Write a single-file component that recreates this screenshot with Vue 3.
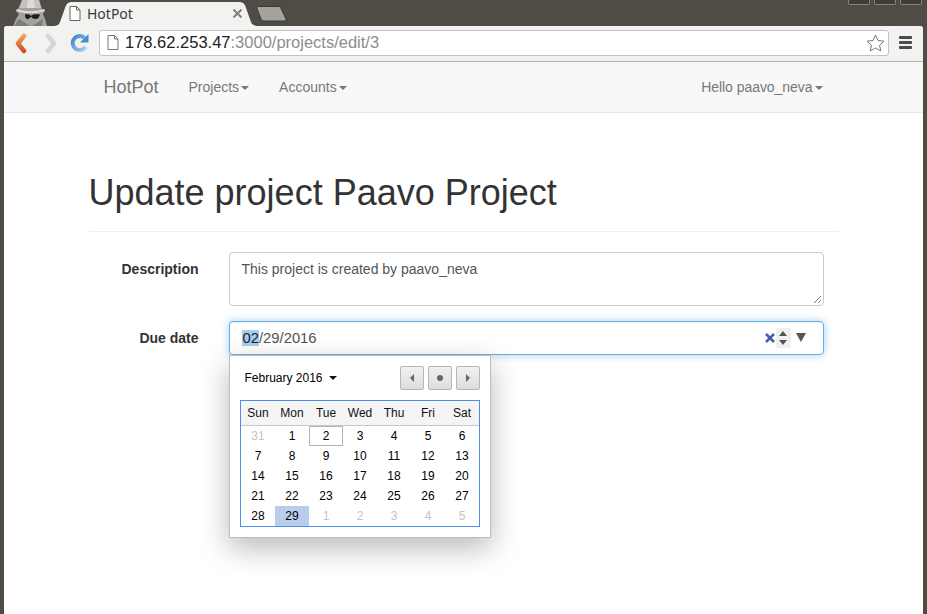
<script setup>
const weekdays = ['Sun', 'Mon', 'Tue', 'Wed', 'Thu', 'Fri', 'Sat']
const days = [
  { n: 31, muted: true }, ...Array.from({ length: 29 }, (_, i) => ({ n: i + 1, today: i === 1, selected: i === 28 })),
  ...[1, 2, 3, 4, 5].map((n) => ({ n, muted: true }))
]
</script>

<template>
  <div class="frame">
    <header class="titlebar">
      <svg class="spy" width="48" height="26" viewBox="0 0 48 26">
        <path d="M14 9 18 0h17l3 9 3 1-2 4 2 5 2 7H9l3-7 3-5-3-3z" fill="#a3a29e" />
        <path d="M18 0h17l2 8H16z" fill="#c4c3bf" />
        <path d="M24 0h6l1 8h-8z" fill="#dddcd9" />
        <path d="M13 9c8 3 19 3 27 0l1 2c-9 3-20 3-29 0z" fill="#dedddb" />
        <path d="M15 19l11 7H10zM39 19l-1 7H28z" fill="#7c7b77" />
        <path d="M21 14.500c3-.5 5 0 6 1.500 1-1.500 4-2 9-1.500-1 3-2 4.500-4.500 4.500s-3.500-1-4.500-2.500c-1 1.500-2 2.500-3.500 2.500-1.500 0-2.500-1.500-2.500-4.500z" fill="#1f1e1c" />
      </svg>
      <div class="tab">
        <svg class="tab-shape" width="206" height="24" viewBox="0 0 206 24"><path d="M0 24c4 0 6-1 7-4l5-14c1.500-4 3-6 7-6h167c4 0 6 2 7 6l5 14c1 3 4 4 8 4z" fill="#f2f2f0" /></svg>
        <svg class="doc" width="12" height="15" viewBox="0 0 12 15"><path d="M1 .5h6.500l3.500 3.500v10.500h-10z M7.500 .5v3.500h3.500" fill="#fff" stroke="#666" /></svg>
        <span class="tab-title">HotPot</span>
        <svg class="tab-close" width="9" height="9" viewBox="0 0 9 9"><path d="m.5.500 8 8M8.500.5l-8 8" stroke="#808080" stroke-width="2" /></svg>
      </div>
      <svg class="new-tab" width="32" height="16" viewBox="0 0 32 16"><path d="M1 2.500C.5 1 1.500.5 3 .5h19c1.500 0 2.500.5 3 2l5 10.500c.5 1.500-.5 2-2 2H8c-1.500 0-2.500-.5-3-2z" fill="#a5a39e" stroke="#3b3935" /></svg>
      <div class="win-btns"><span></span><span></span><span></span></div>
    </header>

    <div class="browser">
      <div class="toolbar">
        <svg width="16" height="22" viewBox="0 0 16 22" class="back">
          <defs><linearGradient id="bk" x1="0" y1="0" x2="0" y2="1"><stop offset="0" stop-color="#f0a060" /><stop offset="1" stop-color="#d2501e" /></linearGradient></defs>
          <path d="M11 4 5 11.500l6 7.500" fill="none" stroke="url(#bk)" stroke-width="4.500" stroke-linejoin="round" stroke-linecap="round" />
        </svg>
        <svg width="14" height="22" viewBox="0 0 14 22" class="fwd"><path d="m3 4 6 7.500-6 7.500" fill="none" stroke="#d6d6d4" stroke-width="4.500" stroke-linejoin="round" stroke-linecap="round" /></svg>
        <svg width="20" height="20" viewBox="0 0 20 20" class="reload">
          <defs><linearGradient id="rl" x1="0" y1="0" x2="1" y2="1"><stop offset="0" stop-color="#3f87cc" /><stop offset="1" stop-color="#a6cdf0" /></linearGradient></defs>
          <path d="M15.500 14a7 7 0 1 1-.5-8.500" fill="none" stroke="url(#rl)" stroke-width="4" />
          <path d="M18.500 1v8.500h-8.500z" fill="#4a8dcf" />
        </svg>
        <div class="omnibox">
          <svg class="doc url-doc" width="12" height="15" viewBox="0 0 12 15"><path d="M1 .5h6.500l3.500 3.500v10.500h-10z M7.500 .5v3.500h3.500" fill="#fff" stroke="#777" /></svg>
          <span class="host">178.62.253.47</span><span class="path">:3000/projects/edit/3</span>
          <svg class="star" width="19" height="18" viewBox="0 0 19 18"><path d="m9.500 1 2.500 5.500 6 .7-4.400 4 1.200 5.800-5.300-3-5.300 3 1.200-5.800-4.400-4 6-.7z" fill="#fff" stroke="#777" /></svg>
        </div>
        <div class="menu"><i></i><i></i><i></i></div>
      </div>

      <nav class="navbar">
        <div class="container nav-inner">
          <a class="brand">HotPot</a>
          <a class="nav-link">Projects<b class="caret"></b></a>
          <a class="nav-link">Accounts<b class="caret"></b></a>
          <a class="nav-link user">Hello paavo_neva<b class="caret"></b></a>
        </div>
      </nav>

      <main class="container page">
        <h1>Update project Paavo Project</h1>
        <form class="form">
          <div class="row">
            <label>Description</label>
            <div class="fake-textarea">This project is created by paavo_neva
              <svg class="grip" width="9" height="9" viewBox="0 0 9 9"><path d="M1 8l7-7M5 8l3-3" stroke="#777" /></svg>
            </div>
          </div>
          <div class="row date-row">
            <label>Due date</label>
            <div class="date-field">
              <span class="date-text"><span class="sel">02</span>/29/2016</span>
              <span class="clear">
                <svg width="10" height="10" viewBox="0 0 10 10"><path d="m1 1 8 8M9 1 1 9" stroke="#3a62a8" stroke-width="2.500" /></svg>
              </span>
              <span class="spin"><i class="up"></i><i class="down"></i></span>
              <i class="drop"></i>

              <div class="picker">
                <div class="picker-head">
                  <span class="month">February 2016<b class="month-caret"></b></span>
                  <div class="pick-btns">
                    <button type="button" class="pbtn"><i class="left"></i></button>
                    <button type="button" class="pbtn"><i class="dot"></i></button>
                    <button type="button" class="pbtn"><i class="right"></i></button>
                  </div>
                </div>
                <div class="cal">
                  <div class="wk" v-for="w in weekdays" :key="w">{{ w }}</div>
                  <div
                    v-for="(d, i) in days"
                    :key="i"
                    class="day"
                    :class="{ muted: d.muted, today: d.today, selected: d.selected }"
                  >{{ d.n }}</div>
                </div>
              </div>
            </div>
          </div>
        </form>
      </main>
    </div>
  </div>
</template>

<style>
html, body { margin: 0; overflow: hidden; }
</style>

<style scoped>
.frame {
  width: 927px; height: 614px; background: #4f4c45; padding: 0 4px; box-sizing: border-box;
  display: flex; flex-direction: column; overflow: hidden;
  font-family: "Liberation Sans", Arial, sans-serif; color: #333;
}
.titlebar { height: 26px; flex: none; display: flex; align-items: flex-end; position: relative; }
.spy { position: absolute; left: 0; top: 0; }
.tab {
  position: relative; width: 206px; height: 24px; margin-left: 49px; display: flex; align-items: center;
  box-sizing: border-box; padding: 0 0 2px 16px;
}
.tab-shape { position: absolute; left: 0; bottom: 0; }
.tab .doc { position: relative; }
.tab-title { position: relative; margin-left: 6px; font-family: "Noto Sans", sans-serif; font-size: 14px; color: #3a3a3a; }
.tab-close { position: relative; margin-left: auto; margin-right: 17px; }
.new-tab { margin: 0 0 4px -3px; position: relative; }
.win-btns { position: absolute; right: 1px; top: -1px; display: flex; gap: 4px; }
.win-btns span { width: 20px; height: 5px; border: 1px solid #85837d; border-top: 0; border-radius: 0 0 2px 2px; background: #3f3d38; }

.browser { flex: 1; background: #fff; border-radius: 3px 3px 0 0; overflow: hidden; display: flex; flex-direction: column; }
.toolbar {
  height: 36px; flex: none; box-sizing: border-box; background: #f2f2f0; border-bottom: 1px solid #b0b0ae;
  display: flex; align-items: center; padding: 0 0 2px 9px;
}
.back { margin-right: 16px; }
.fwd { margin-right: 11px; }
.reload { margin-right: 9px; }
.omnibox {
  width: 790px; height: 26px; box-sizing: border-box; background: #fff; border: 1px solid #c3c3c1; border-radius: 3px;
  display: flex; align-items: center; padding-left: 7px; font-size: 16.500px;
}
.url-doc { margin-right: 6px; }
.host { color: #222; }
.path { color: #8d8d8d; }
.star { margin-left: auto; margin-right: 3px; }
.menu { margin-left: 10px; display: flex; flex-direction: column; gap: 2px; }
.menu i { display: block; width: 13px; height: 3px; background: #4a4a4a; border-radius: 1px; }

.container { width: 750px; margin: 0 auto; }
.navbar { height: 51px; flex: none; box-sizing: border-box; background: #f8f8f8; border-bottom: 1px solid #e7e7e7; }
.nav-inner { display: flex; align-items: center; height: 50px; font-size: 14px; padding: 0 15px; box-sizing: border-box; }
.brand { font-size: 18px; color: #777; margin-right: 30px; }
.nav-link { color: #777; margin-right: 30px; }
.nav-link.user { margin-left: auto; margin-right: 1px; letter-spacing: -.05px; }
.caret { display: inline-block; margin-left: 2px; vertical-align: middle; border-top: 4px solid #777; border-left: 4px solid transparent; border-right: 4px solid transparent; }

.page { flex: 1; }
h1 { margin: 60px 0 0; font-size: 36px; font-weight: 400; line-height: 40px; padding-bottom: 18px; border-bottom: 1px solid #eee; color: #333; }
.form { padding-top: 20px; font-size: 14px; }
.row { display: flex; }
.row label { width: 110px; margin-right: 30px; text-align: right; font-weight: 700; padding-top: 7px; line-height: 20px; flex: none; }
.fake-textarea {
  width: 595px; height: 54px; box-sizing: border-box; border: 1px solid #ccc; border-radius: 4px; padding: 6px 12px;
  line-height: 20px; color: #555; position: relative;
}
.grip { position: absolute; right: 1px; bottom: 1px; }
.date-row { margin-top: 15px; }
.date-row label { padding-top: 7px; }
.date-field {
  width: 595px; height: 34px; box-sizing: border-box; border: 1px solid #66afe9; border-radius: 4px; position: relative;
  box-shadow: inset 0 1px 1px rgba(0,0,0,.075), 0 0 8px rgba(102,175,233,.6);
  display: flex; align-items: center; padding-left: 12px; color: #555; line-height: 20px; background: #fff;
  font-size: 14.800px;
}
.sel { background: #a9cdf2; color: #222; padding-left: 1px; }
.date-text { flex: 1; }
.clear { display: flex; margin-right: 1px; }
.spin { width: 15px; height: 20px; background: #f0f0f0; display: flex; flex-direction: column; align-items: center; justify-content: center; gap: 4px; }
.spin i { display: block; border-left: 4px solid transparent; border-right: 4px solid transparent; }
.spin .up { border-bottom: 5px solid #555; }
.spin .down { border-top: 5px solid #555; }
.drop { display: block; border-left: 5px solid transparent; border-right: 5px solid transparent; border-top: 9px solid #555; margin: 0 17px 2px 5px; }

.picker {
  position: absolute; left: -1px; top: 33px; width: 262px; height: 183px; box-sizing: border-box; background: #fff;
  border: 1px solid #bdbdbd; box-shadow: 0 10px 28px rgba(0,0,0,.28); padding: 10px 10px 0; color: #000; z-index: 2;
  font-size: 12px;
}
.picker-head { display: flex; align-items: center; justify-content: space-between; height: 24px; padding: 0 0 0 5px; margin-bottom: 10px; }
.month { font-size: 12px; display: flex; align-items: center; }
.month-caret { display: block; margin-left: 6px; border-top: 4px solid #111; border-left: 4px solid transparent; border-right: 4px solid transparent; }
.pick-btns { display: flex; gap: 4px; }
.pbtn {
  width: 24px; height: 24px; padding: 0; box-sizing: border-box; border: 1px solid #b5b5b5; border-radius: 2px;
  background: linear-gradient(#f0f0f0, #dedede); display: flex; align-items: center; justify-content: center;
}
.left { border-right: 4px solid #666; border-top: 4px solid transparent; border-bottom: 4px solid transparent; }
.right { border-left: 4px solid #666; border-top: 4px solid transparent; border-bottom: 4px solid transparent; }
.dot { width: 6px; height: 6px; border-radius: 50%; background: #666; }
.cal {
  width: 240px; box-sizing: border-box; border: 1px solid #4a90e8; display: grid;
  grid-template-columns: repeat(7, 34px); grid-template-rows: 25px repeat(5, 20px); font-size: 12px;
}
.wk { background: #f5f5f5; border-bottom: 1px solid #c8c8c8; display: flex; align-items: center; justify-content: center; color: #111; padding-left: 1px; }
.day { display: flex; align-items: center; justify-content: center; box-sizing: border-box; color: #000; padding-left: 1px; }
.day.muted { color: #c4c4c4; }
.day.today { border: 1px solid #b5b5b5; }
.day.selected { background: #bbcdec; }
</style>
